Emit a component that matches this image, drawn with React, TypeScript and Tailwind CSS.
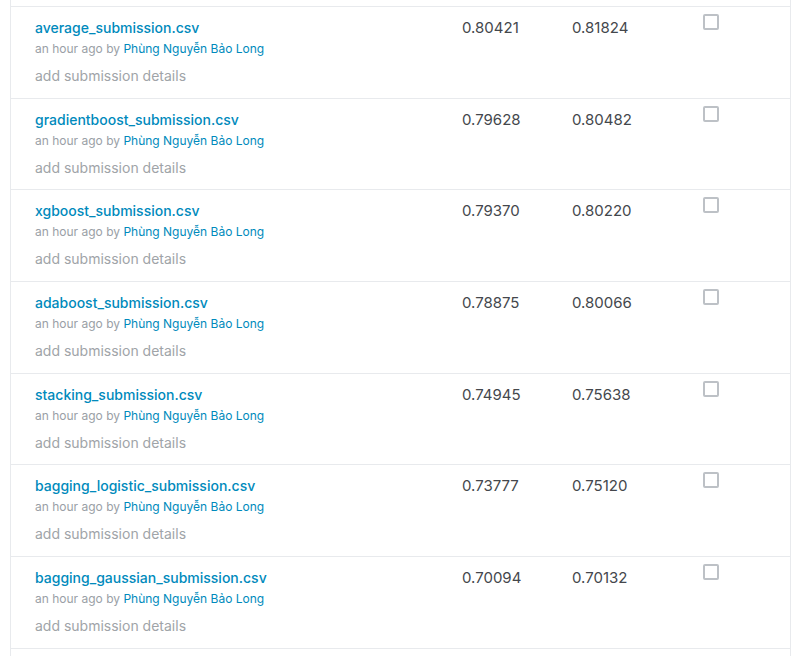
import React from 'react';

interface Submission {
  file: string;
  priv: string;
  pub: string;
}

const submissions: Submission[] = [
  { file: 'average_submission.csv', priv: '0.80421', pub: '0.81824' },
  { file: 'gradientboost_submission.csv', priv: '0.79628', pub: '0.80482' },
  { file: 'xgboost_submission.csv', priv: '0.79370', pub: '0.80220' },
  { file: 'adaboost_submission.csv', priv: '0.78875', pub: '0.80066' },
  { file: 'stacking_submission.csv', priv: '0.74945', pub: '0.75638' },
  { file: 'bagging_logistic_submission.csv', priv: '0.73777', pub: '0.75120' },
  { file: 'bagging_gaussian_submission.csv', priv: '0.70094', pub: '0.70132' },
];

function Row({ file, priv, pub }: Submission) {
  return (
    <div className="flex h-[91.67px] border-t border-[#e8eaed] overflow-hidden font-['Inter',sans-serif]">
      {/* file + meta */}
      <div className="w-[451px] pl-[24px] pt-[11px] flex flex-col">
        <span className="text-[14px] leading-[20px] font-medium text-[#008abc]">
          {file}
        </span>
        <span className="mt-[1px] text-[12px] leading-[20px] text-[#9aa0a6]">
          an hour ago by <span className="text-[#008abc]">Phùng Nguyễn Bảo Long</span>
        </span>
        <span className="mt-[7px] text-[14px] leading-[20px] text-[#a0a4a8]">
          add submission details
        </span>
      </div>

      {/* scores */}
      <div className="w-[110px] pt-[11px] text-[15px] leading-[20px] text-[#44474c]">
        {priv}
      </div>
      <div className="w-[131px] pt-[11px] text-[15px] leading-[20px] text-[#44474c]">
        {pub}
      </div>

      {/* select */}
      <div className="pt-[7px]">
        <div className="w-[16px] h-[16px] border-2 border-[#bdc1c6] rounded-[2px] bg-white" />
      </div>
    </div>
  );
}

export default function App() {
  return (
    <div className="w-[808px] h-[656px] bg-white overflow-hidden">
      <div className="ml-[10px] w-[781px] h-full border-x border-[#e8eaed]">
        <div className="h-[6px]" />
        {submissions.map((s) => (
          <Row key={s.file} {...s} />
        ))}
        <div className="border-t border-[#e8eaed]" />
      </div>
    </div>
  );
}
